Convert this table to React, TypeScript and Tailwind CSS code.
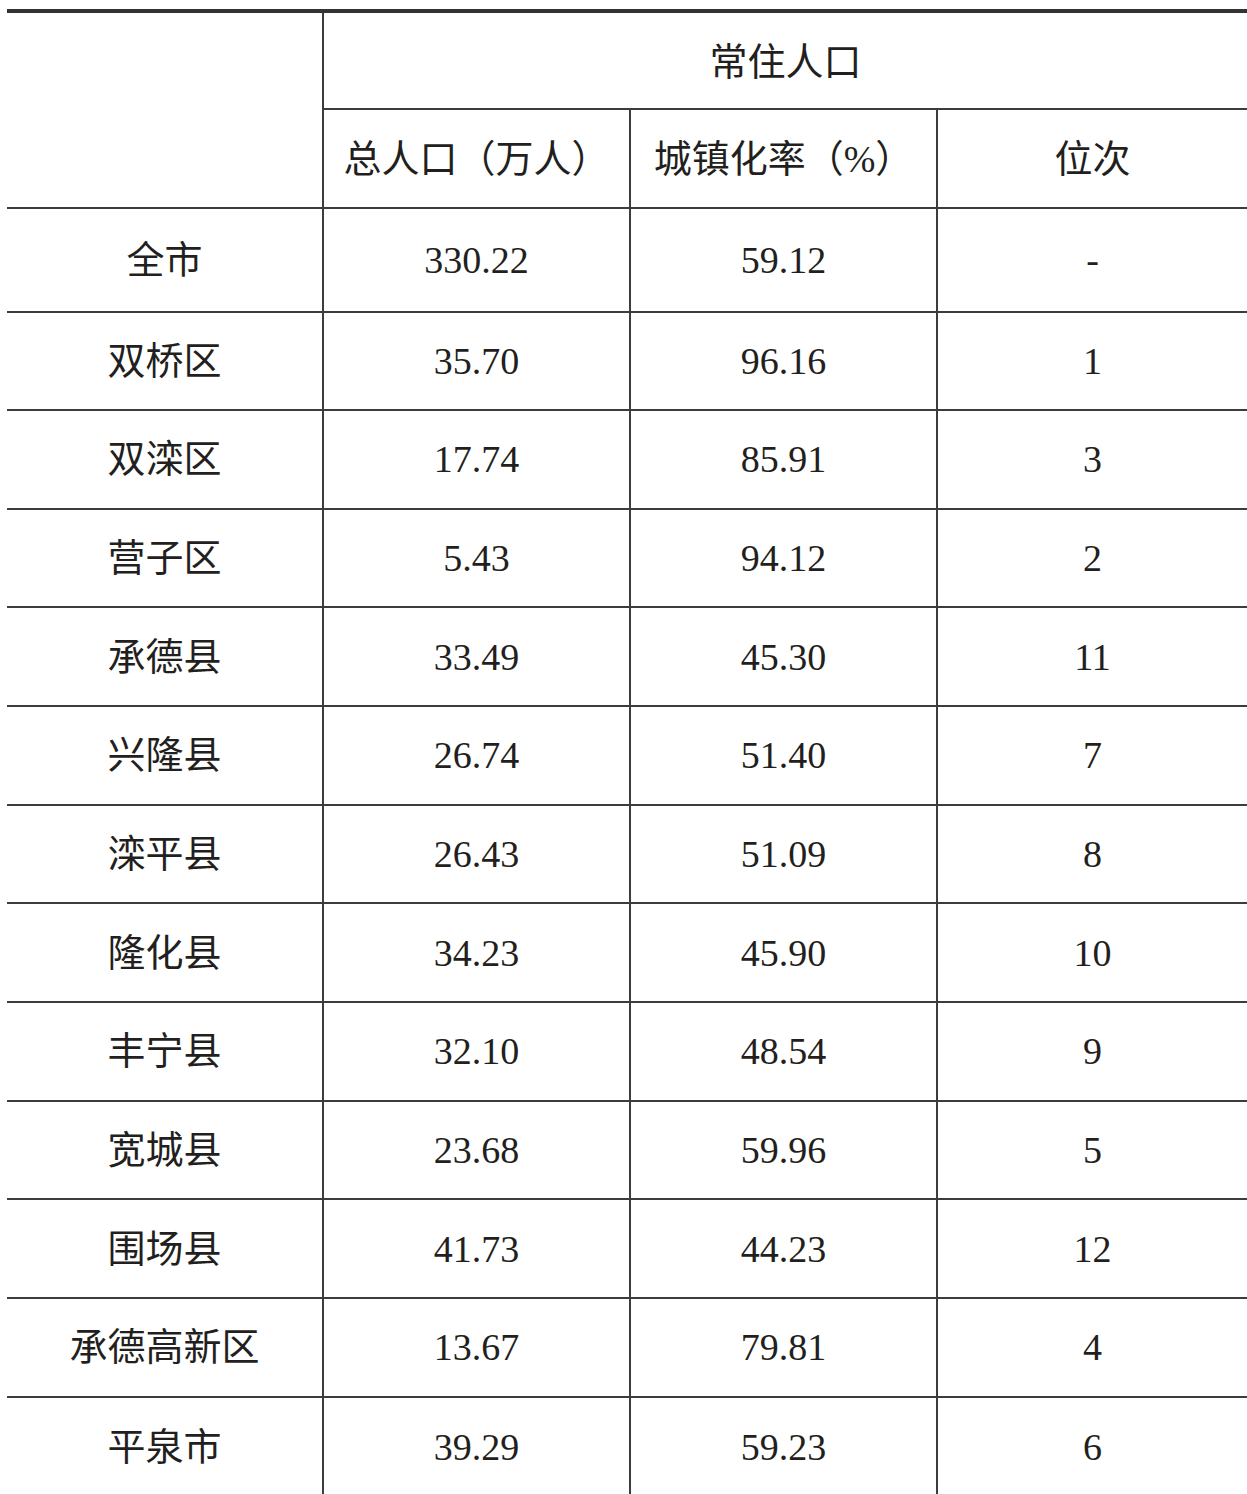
import React from 'react';

const rows = [
  { name: '全市', total: '330.22', rate: '59.12', rank: '-' },
  { name: '双桥区', total: '35.70', rate: '96.16', rank: '1' },
  { name: '双滦区', total: '17.74', rate: '85.91', rank: '3' },
  { name: '营子区', total: '5.43', rate: '94.12', rank: '2' },
  { name: '承德县', total: '33.49', rate: '45.30', rank: '11' },
  { name: '兴隆县', total: '26.74', rate: '51.40', rank: '7' },
  { name: '滦平县', total: '26.43', rate: '51.09', rank: '8' },
  { name: '隆化县', total: '34.23', rate: '45.90', rank: '10' },
  { name: '丰宁县', total: '32.10', rate: '48.54', rank: '9' },
  { name: '宽城县', total: '23.68', rate: '59.96', rank: '5' },
  { name: '围场县', total: '41.73', rate: '44.23', rank: '12' },
  { name: '承德高新区', total: '13.67', rate: '79.81', rank: '4' },
  { name: '平泉市', total: '39.29', rate: '59.23', rank: '6' },
];

const cjk = "font-['Liberation_Serif','Noto_Sans_CJK_SC',serif]";

export default function App() {
  return (
    <div className={`h-[1494px] w-[1247px] overflow-hidden bg-white pt-[9px] pl-[7px] text-[38px] leading-none text-[#231f20] ${cjk}`}>
      <div className="border-t-4 border-[#333]">
        <div className="grid grid-cols-[315px_307px_307px_311px] grid-rows-[97px_99px_103.5px_repeat(12,98.65px)]">
          {/* header */}
          <div className="row-span-2 border-b-2 border-[#3c3c3c]" />
          <div className="col-span-3 flex items-center justify-center border-b-2 border-l-2 border-[#3c3c3c] pt-[2px]">
            常住人口
          </div>
          <div className="flex items-center justify-center border-b-2 border-l-2 border-[#3c3c3c]">
            总人口（万人）
          </div>
          <div className="flex items-center justify-center border-b-2 border-l-2 border-[#3c3c3c]">
            城镇化率（%）
          </div>
          <div className="flex items-center justify-center border-b-2 border-l-2 border-[#3c3c3c]">
            位次
          </div>

          {/* body */}
          {rows.map((r, i) => {
            const last = i === rows.length - 1;
            const b = last ? '' : 'border-b-2';
            return (
              <React.Fragment key={r.name}>
                <div className={`flex items-center justify-center ${b} border-[#3c3c3c]`}>{r.name}</div>
                <div className={`flex items-center justify-center ${b} border-l-2 border-[#3c3c3c]`}>{r.total}</div>
                <div className={`flex items-center justify-center ${b} border-l-2 border-[#3c3c3c]`}>{r.rate}</div>
                <div className={`flex items-center justify-center ${b} border-l-2 border-[#3c3c3c]`}>{r.rank}</div>
              </React.Fragment>
            );
          })}
        </div>
      </div>
    </div>
  );
}
